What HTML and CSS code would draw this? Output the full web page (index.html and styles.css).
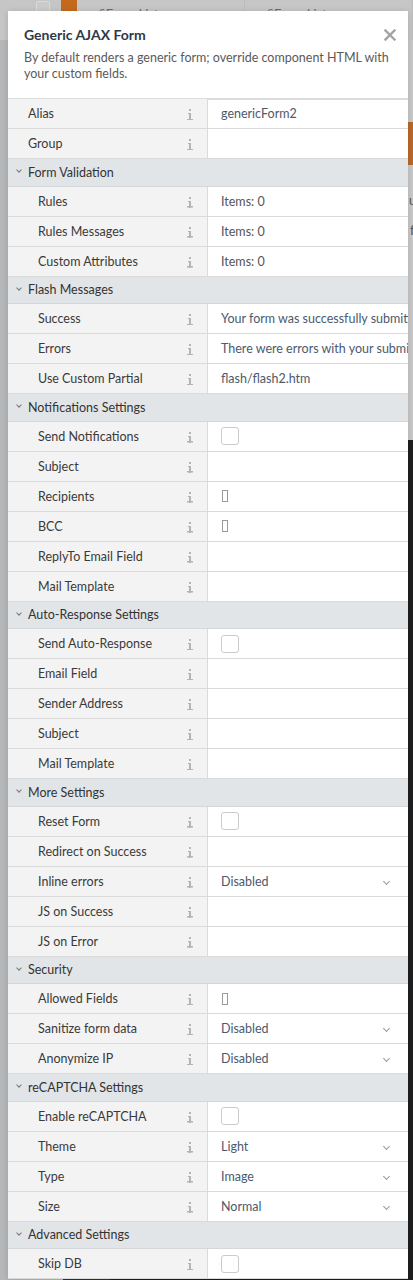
FILE: index.html
```html
<!DOCTYPE html>
<html>
<head>
<meta charset="utf-8">
<link rel="stylesheet" href="styles.css">
</head>
<body>
<div class="page">
  <div class="tabs">
    <div class="tab-check"></div>
    <div class="tab-accent"></div>
    <div class="tab"><span class="tab-f">f</span> Form List <span class="tab-x">×</span></div>
    <div class="tab"><span class="tab-f">f</span> Form List <span class="tab-x">×</span></div>
  </div>
  <div class="workspace">
    <div class="sidebar"></div>
    <div class="main">
      <div class="form-area">
        <div class="form-btn"></div>
        <div class="form-text first">ut</div>
        <div class="form-text">fa</div>
      </div>
      <div class="code-area">
        <div class="gutter"></div>
        <div class="code"></div>
      </div>
    </div>
  </div>
</div>

<div class="modal">
  <div class="modal-header">
    <div class="modal-title">Generic AJAX Form</div>
    <div class="modal-desc">By default renders a generic form; override component HTML with your custom fields.</div>
    <svg class="modal-close" width="12" height="12" viewBox="0 0 12 12"><path d="M1.5 1.5l9 9M10.5 1.5l-9 9" stroke="#a3a3a3" stroke-width="2.4" stroke-linecap="square"/></svg>
  </div>

  <div class="props">
    <div class="row"><div class="label top">Alias<i class="info"></i></div><div class="value text">genericForm2</div></div>
    <div class="row"><div class="label top">Group<i class="info"></i></div><div class="value"></div></div>

    <div class="section"><span class="chev"></span>Form Validation</div>
    <div class="row"><div class="label">Rules<i class="info"></i></div><div class="value items">Items: 0</div></div>
    <div class="row"><div class="label">Rules Messages<i class="info"></i></div><div class="value items">Items: 0</div></div>
    <div class="row"><div class="label">Custom Attributes<i class="info"></i></div><div class="value items">Items: 0</div></div>

    <div class="section"><span class="chev"></span>Flash Messages</div>
    <div class="row"><div class="label">Success<i class="info"></i></div><div class="value text">Your form was successfully submitted</div></div>
    <div class="row"><div class="label">Errors<i class="info"></i></div><div class="value text">There were errors with your submission</div></div>
    <div class="row"><div class="label">Use Custom Partial<i class="info"></i></div><div class="value text">flash/flash2.htm</div></div>

    <div class="section"><span class="chev"></span>Notifications Settings</div>
    <div class="row"><div class="label">Send Notifications<i class="info"></i></div><div class="value"><span class="checkbox"></span></div></div>
    <div class="row"><div class="label">Subject<i class="info"></i></div><div class="value"></div></div>
    <div class="row"><div class="label">Recipients<i class="info"></i></div><div class="value"><span class="arr"></span></div></div>
    <div class="row"><div class="label">BCC<i class="info"></i></div><div class="value"><span class="arr"></span></div></div>
    <div class="row"><div class="label">ReplyTo Email Field<i class="info"></i></div><div class="value"></div></div>
    <div class="row"><div class="label">Mail Template<i class="info"></i></div><div class="value"></div></div>

    <div class="section"><span class="chev"></span>Auto-Response Settings</div>
    <div class="row"><div class="label">Send Auto-Response<i class="info"></i></div><div class="value"><span class="checkbox"></span></div></div>
    <div class="row"><div class="label">Email Field<i class="info"></i></div><div class="value"></div></div>
    <div class="row"><div class="label">Sender Address<i class="info"></i></div><div class="value"></div></div>
    <div class="row"><div class="label">Subject<i class="info"></i></div><div class="value"></div></div>
    <div class="row"><div class="label">Mail Template<i class="info"></i></div><div class="value"></div></div>

    <div class="section"><span class="chev"></span>More Settings</div>
    <div class="row"><div class="label">Reset Form<i class="info"></i></div><div class="value"><span class="checkbox"></span></div></div>
    <div class="row"><div class="label">Redirect on Success<i class="info"></i></div><div class="value"></div></div>
    <div class="row"><div class="label">Inline errors<i class="info"></i></div><div class="value text select">Disabled<span class="dd"></span></div></div>
    <div class="row"><div class="label">JS on Success<i class="info"></i></div><div class="value"></div></div>
    <div class="row"><div class="label">JS on Error<i class="info"></i></div><div class="value"></div></div>

    <div class="section"><span class="chev"></span>Security</div>
    <div class="row"><div class="label">Allowed Fields<i class="info"></i></div><div class="value"><span class="arr"></span></div></div>
    <div class="row"><div class="label">Sanitize form data<i class="info"></i></div><div class="value text select">Disabled<span class="dd"></span></div></div>
    <div class="row"><div class="label">Anonymize IP<i class="info"></i></div><div class="value text select">Disabled<span class="dd"></span></div></div>

    <div class="section"><span class="chev"></span>reCAPTCHA Settings</div>
    <div class="row"><div class="label">Enable reCAPTCHA<i class="info"></i></div><div class="value"><span class="checkbox"></span></div></div>
    <div class="row"><div class="label">Theme<i class="info"></i></div><div class="value text select">Light<span class="dd"></span></div></div>
    <div class="row"><div class="label">Type<i class="info"></i></div><div class="value text select">Image<span class="dd"></span></div></div>
    <div class="row"><div class="label">Size<i class="info"></i></div><div class="value text select">Normal<span class="dd"></span></div></div>

    <div class="section"><span class="chev"></span>Advanced Settings</div>
    <div class="row"><div class="label">Skip DB<i class="info"></i></div><div class="value"><span class="checkbox"></span></div></div>
  </div>
</div>
</body>
</html>
```

FILE: styles.css
```css
html, body {
  margin: 0;
  padding: 0;
}
body {
  width: 413px;
  height: 1280px;
  overflow: hidden;
  position: relative;
  background: #b5b7b8;
  font-family: Lato, "Noto Sans", sans-serif;
}

/* dimmed page behind the modal */
.page {
  display: flex;
  flex-direction: column;
  height: 1280px;
}
.tabs {
  height: 40px;
  background: #c6c6c6;
  display: flex;
  align-items: flex-start;
  flex: none;
}
.tab-check {
  width: 15px;
  height: 24px;
  margin: 1px 0 0 36px;
  border: 1px solid #dadada;
  border-radius: 2px;
  background: #cacaca;
}
.tab-accent {
  width: 19px;
  height: 40px;
  margin-left: 11px;
  background: #c2691f;
}
.tab {
  width: 168px;
  padding: 6px 10px 0 21px;
  font-size: 13px;
  color: #6d6d6d;
  border-right: 1px solid #bcbcbc;
  height: 34px;
  position: relative;
}
.tab-f {
  font-style: italic;
  font-family: "DejaVu Serif", serif;
}
.tab-x {
  position: absolute;
  right: 12px;
  top: 4px;
  color: #8a8a8a;
  font-size: 16px;
}
.workspace {
  flex: 1;
  display: flex;
}
.sidebar {
  width: 63px;
  background: #b5b7b8;
}
.main {
  flex: 1;
  display: flex;
  flex-direction: column;
}
.form-area {
  height: 400px;
  background: #c9c9c9;
  display: flex;
  flex-direction: column;
  align-items: flex-end;
}
.form-btn {
  width: 80px;
  height: 43px;
  margin-top: 82px;
  background: #b8692a;
}
.form-text {
  font-size: 13px;
  line-height: 16px;
  color: #555;
  margin-top: 14px;
  margin-right: -8px;
}
.form-text.first {
  margin-top: 27px;
}
.code-area {
  flex: 1;
  display: flex;
}
.gutter {
  width: 47px;
  background: #333333;
}
.code {
  flex: 1;
  background: #1f1f1f;
}

/* modal */
.modal {
  position: absolute;
  left: 8px;
  top: 11px;
  width: 400px;
  background: #fff;
  box-shadow: 0 1px 6px rgba(0, 0, 0, 0.15);
}
.modal-header {
  position: relative;
  padding: 14px 16px 16px 16px;
  border-bottom: 2px solid #dcdcdc;
}
.modal-title {
  font-size: 14px;
  font-weight: bold;
  color: #2c3a48;
  line-height: 20px;
}
.modal-desc {
  margin-top: 5px;
  font-size: 12.5px;
  line-height: 16px;
  color: #5a5a5a;
}
.modal-close {
  position: absolute;
  right: 12px;
  top: 18px;
}

.props {
  display: flex;
  flex-direction: column;
  margin-top: -1px;
}
.row {
  display: grid;
  grid-template-columns: 200px 200px;
  height: 29px;
  border-bottom: 1px solid #dadada;
}
.label {
  background: #f3f3f3;
  border-right: 1px solid #dadada;
  display: flex;
  align-items: center;
  padding-left: 30px;
  font-size: 12.5px;
  color: #3a3a3a;
  position: relative;
}
.label.top {
  padding-left: 20px;
}
.info {
  position: absolute;
  right: 14px;
  top: 10px;
  width: 6px;
  height: 11px;
  background:
    linear-gradient(#b4b4b4, #b4b4b4) 2px 0 / 2px 2px no-repeat,
    linear-gradient(#b4b4b4, #b4b4b4) 2px 4px / 2px 7px no-repeat,
    linear-gradient(#b4b4b4, #b4b4b4) 1px 4px / 2px 1px no-repeat,
    linear-gradient(#b4b4b4, #b4b4b4) 0 9.5px / 6px 1.5px no-repeat;
}
.value {
  display: flex;
  align-items: center;
  padding: 0 10px 0 13px;
  font-size: 12.5px;
  white-space: nowrap;
  overflow: hidden;
  position: relative;
}
.value.text {
  color: #4b5a6e;
}
.value.items {
  color: #555;
}
.value.select {
  padding-right: 30px;
}
.dd {
  position: absolute;
  right: 19px;
  top: 12px;
  width: 4px;
  height: 4px;
  border-right: 1px solid #999;
  border-bottom: 1px solid #999;
  transform: rotate(45deg);
}
.checkbox {
  width: 16px;
  height: 16px;
  border: 1px solid #cbcbcb;
  border-radius: 3px;
  background: #fff;
}
.arr {
  width: 4px;
  height: 10px;
  border: 1px solid #9a9a9a;
  margin-left: 1px;
}
.section {
  height: 26.5px;
  border-bottom: 1px solid #d5d8da;
  background: #e2e5e7;
  display: flex;
  align-items: center;
  padding-left: 20px;
  font-size: 12.5px;
  color: #333;
  position: relative;
}
.chev {
  position: absolute;
  left: 9px;
  top: 9px;
  width: 3px;
  height: 3px;
  border-right: 1px solid #777;
  border-bottom: 1px solid #777;
  transform: rotate(45deg);
}
```
